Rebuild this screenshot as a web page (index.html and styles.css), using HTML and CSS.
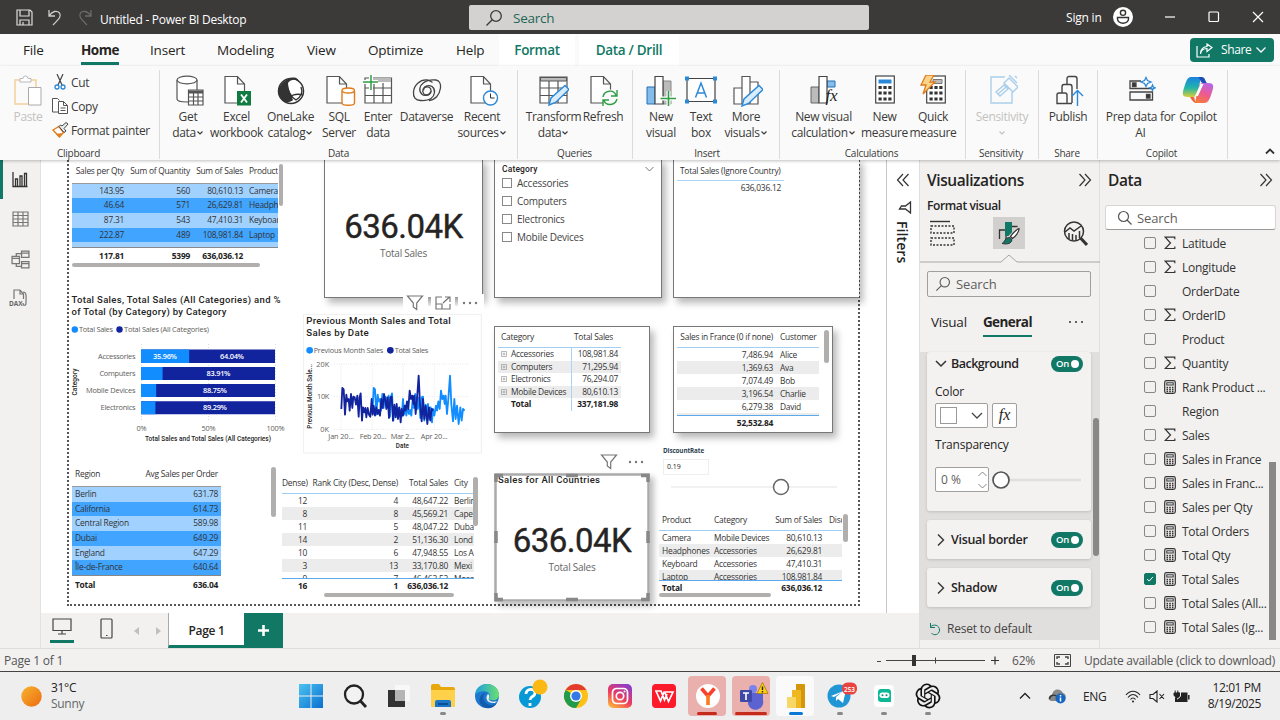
FILE: index.html
```html
<!DOCTYPE html>
<html lang="en">
<head>
<meta charset="utf-8">
<title>Untitled - Power BI Desktop</title>
<link rel="stylesheet" href="styles.css">
</head>
<body>
<svg class="defs" width="0" height="0">
  <defs>
    <symbol id="calc" viewBox="0 0 12 14"><rect x=".7" y=".7" width="10.6" height="12.6" rx="1.8" fill="none" stroke="#333" stroke-width="1.2"/><rect x="2.8" y="2.8" width="6.4" height="2.2" fill="none" stroke="#333"/><path d="M2.5 7.5h7M2.5 9.5h7M2.5 11.5h7" stroke="#333" stroke-width="1.3" stroke-dasharray="1.6 1.1"/></symbol>
    <symbol id="sigma" viewBox="0 0 12 14"><path d="M10.800 3.200V1.200H1.200L6.500 7l-5.300 5.500H10.800V10.500" fill="none" stroke="#333" stroke-width="1.200"/></symbol>
    <symbol id="down" viewBox="0 0 8 6"><path d="M1.500 1.500L4 4l2.500-2.500" fill="none" stroke="currentColor" stroke-width="1.200"/></symbol>
    <symbol id="doc" viewBox="0 0 24 32"><path d="M1 1.500h12.500l7 7.500V28H1zM13.500 1.500V9h7" fill="#fff" stroke="#555" stroke-width="1.200"/></symbol>
    <symbol id="keypad" viewBox="0 0 20 30"><rect x=".7" y="1" width="18.600" height="27" fill="#fff" stroke="#444" stroke-width="1.200"/><path d="M3.500 12.500h13M3.500 18h13M3.500 24h13" stroke="#333" stroke-width="3" stroke-dasharray="3.200 1.700"/></symbol>
    <symbol id="funnel" viewBox="0 0 18 16"><path d="M1.500 1h15l-5.800 7v6.500l-3.400-2.500V8z" fill="#fff" stroke="#777" stroke-width="1.200"/></symbol>
    <symbol id="lens" viewBox="0 0 18 18"><circle cx="11" cy="7" r="5.300" fill="none" stroke="currentColor" stroke-width="1.300"/><path d="M7.200 10.800L1.500 16.500" stroke="currentColor" stroke-width="1.300"/></symbol>
    <symbol id="collapse" viewBox="0 0 14 14"><path d="M1.500 1l5.500 6-5.500 6M7 1l5.500 6L7 13" fill="none" stroke="#333" stroke-width="1.200"/></symbol>
    <symbol id="plusbox" viewBox="0 0 6 6"><path d="M.5.500h5v5h-5zM3 1.500v3M1.500 3h3" fill="none" stroke="#999" stroke-width=".7"/></symbol>
  </defs>
</svg>
<div class="app">
  <header class="titlebar">
    <div class="quick">
      <svg width="17" height="17" viewBox="0 0 17 17" fill="none" stroke="#ddd" stroke-width="1.200"><path d="M1 1h13l2 2v13H1zM4 1v6h9V1M4 16v-5h9v5M7 13v3"/></svg>
      <svg width="16" height="17" viewBox="0 0 16 17" fill="none" stroke="#ccc" stroke-width="1.300"><path d="M2 1v6h6M2 7C5 2 10 1 12.500 4c2 3 .5 5-6.500 12"/></svg>
      <svg width="16" height="17" viewBox="0 0 16 17" fill="none" stroke="#6c6b6a" stroke-width="1.300"><path d="M14 1v6H8M14 7C11 2 6 1 3.500 4c-2 3-.5 5 6.500 12"/></svg>
    </div>
    <span class="doc-title">Untitled - Power BI Desktop</span>
    <div class="top-search"><svg width="18" height="18"><use href="#lens"/></svg><span>Search</span></div>
    <div class="account"><span>Sign in</span>
      <svg width="20" height="20" viewBox="0 0 20 20"><circle cx="10" cy="10" r="10" fill="#fff"/><g fill="none" stroke="#333" stroke-width="1.400"><circle cx="10" cy="5.800" r="2.600"/><path d="M4.500 10.500h11v1.500a5.500 4.200 0 0 1-11 0z"/></g></svg>
    </div>
    <div class="window-buttons">
      <svg width="12" height="12"><path d="M1 6h10" stroke="#fff" stroke-width="1.200"/></svg>
      <svg width="12" height="12"><rect x="1" y="1" width="9.500" height="9.500" rx="1" fill="none" stroke="#fff" stroke-width="1.200"/></svg>
      <svg width="12" height="12"><path d="M1 1l10 10M11 1L1 11" stroke="#fff" stroke-width="1.200"/></svg>
    </div>
  </header>

  <nav class="tabs">
    <span class="tab t-file">File</span><span class="tab t-home">Home</span><span class="tab t-insert">Insert</span><span class="tab t-model">Modeling</span><span class="tab t-view">View</span><span class="tab t-opt">Optimize</span><span class="tab t-help">Help</span>
    <span class="tab ctx c-format">Format</span><span class="tab ctx c-data">Data / Drill</span>
    <span class="share"><svg width="17" height="15" viewBox="0 0 17 15" fill="none" stroke="#fff" stroke-width="1.200"><path d="M1 3v11h12v-3M4.500 11C5 7 7 5.500 11 5.500V8.500L16 4.500 11 1v2.500C6.500 4 4.500 7 4.500 11z"/></svg>Share<svg width="12" height="8" viewBox="0 0 12 8"><path d="M1.500 1.500L6 6l4.500-4.500" fill="none" stroke="#fff" stroke-width="1.300"/></svg></span>
  </nav>

  <section class="ribbon">
    <div class="group g-clip">
      <div class="tools">
        <div class="btn w56 off"><svg width="28" height="32" viewBox="0 0 28 32" fill="none"><path d="M6 5H1v24h13M17 5h5v7" stroke="#f5cf9b" stroke-width="1.500"/><path d="M6 7V3.500h3a2.500 2.500 0 0 1 5 0h3V7z" stroke="#b9b9b9" fill="#fff"/><path d="M14.500 12.500h12.500v17.500H14.500z" stroke="#aaa" fill="#fff"/></svg><span>Paste</span></div>
        <div class="smalls">
          <div><svg width="17" height="16" viewBox="0 0 17 16" fill="none"><path d="M5 0l5 11M11 0L6 11" stroke="#444" stroke-width="1.200"/><circle cx="5" cy="13" r="2" stroke="#2b88d8" stroke-width="1.300"/><circle cx="11" cy="13" r="2" stroke="#2b88d8" stroke-width="1.300"/></svg>Cut</div>
          <div><svg width="17" height="16" viewBox="0 0 17 16" fill="#fff" stroke="#555"><path d="M7 14H.500V.500h5l2 2"/><path d="M6.500 3.500h5l4 4v8h-9zM11.500 3.500v4h4M8.500 10h5M8.500 12.500h5"/></svg>Copy</div>
          <div><svg width="17" height="16" viewBox="0 0 17 16"><path d="M1 8l6-3.500 4.500 6L7.500 15z" fill="#fff" stroke="#e07b1a" stroke-width="1.400"/><path d="M4 12l6-1-3 4z" fill="#e07b1a"/><path d="M7 4.500l5 6 2-1.500-2-2.500L16 2l-2-1.500-4 3.500-1.500-1z" fill="#eee" stroke="#444"/></svg>Format painter</div>
        </div>
      </div>
      <span class="caption">Clipboard</span>
    </div>
    <div class="group g-data">
      <div class="tools">
        <div class="btn w48"><svg class="nudge" width="30" height="32" viewBox="0 0 30 32" fill="#fff" stroke="#555" stroke-width="1.200"><path d="M2 5v19c0 4 20 4 20 0V5"/><ellipse cx="12" cy="5" rx="10" ry="3.800"/><path d="M13.500 15h14.500v15H13.500z"/><path d="M13.500 17h14.500" stroke-width="3"/><path d="M13.500 22h14.500M13.500 26h14.500M18.500 17v13M23 17v13"/></svg><span>Get<br>data<svg class="dn"><use href="#down"/></svg></span></div>
        <div class="btn w49"><svg class="nudge" width="28" height="32" viewBox="0 0 28 32"><use href="#doc" width="24" height="32"/><rect x="13" y="16" width="14" height="14.500" fill="#107c41"/><path d="M17 19.500l6 8M23 19.500l-6 8" stroke="#fff" stroke-width="1.800"/></svg><span>Excel<br>workbook</span></div>
        <div class="btn w59"><svg width="30" height="32" viewBox="0 0 30 32"><circle cx="15" cy="16" r="12.500" fill="#fff" stroke="#333" stroke-width="1.500"/><path d="M10 5C17 0 23 3 23 7c-3-3-8-3-11 1 0 5 2 10 5 17-3 3-9 3-12-1C1 18 1 11 10 5z" fill="#333"/><path d="M11 8c0 7 4 14 9 17 5-3 7-8 5-13M12 25c2-5 8-7 15-5" fill="none" stroke="#333" stroke-width="1.400"/></svg><span>OneLake<br>catalog<svg class="dn"><use href="#down"/></svg></span></div>
        <div class="btn w38"><svg class="nudge" width="30" height="32" viewBox="0 0 30 32"><use href="#doc" width="24" height="32"/><path d="M16 16v12c0 3 12.500 3 12.500 0V16" fill="#fff" stroke="#e07b1a" stroke-width="1.400"/><ellipse cx="22.200" cy="15.500" rx="6.200" ry="2.500" fill="#fff" stroke="#e07b1a" stroke-width="1.400"/></svg><span>SQL<br>Server</span></div>
        <div class="btn w40"><svg width="30" height="32" viewBox="0 0 30 32"><path d="M2 3h26.500v25H2z" fill="#fff" stroke="#555" stroke-width="1.200"/><path d="M10 3h18v4H10z" fill="#bbb"/><path d="M2 13h26.500M2 20.500h26.500M11 8v20M20 8v20" stroke="#555" stroke-width="1.200"/><path d="M8 0v15M0 7h15" stroke="#fff" stroke-width="4"/><path d="M8 0v15M0 7h15" stroke="#2f9e44" stroke-width="1.500"/></svg><span>Enter<br>data</span></div>
        <div class="btn w57"><svg width="30" height="32" viewBox="0 0 30 32" fill="none" stroke="#444" stroke-width="1.300"><path d="M19 16c0 3-2.500 4.500-5 4s-4-3-2.800-6C12.500 11 17 9.500 20 11.500c4 3 3 9-1 12-3.500 2.500-8 2-10.500 2C3.500 25.500 1 22 1.500 17 2 10 8 4.500 15 5c2.500.2 4 1.500 5.500 2.500"/><path d="M11.500 15.500c0-2.500 2-4 4.200-3.700 3 .4 3.800 3.200 3 5.200-1.500 3.500-6.500 4.500-9 2-3.500-3.500-1.800-8.500 1.500-11C15 5 20 4.500 24 5c3.500.5 5 4 4.500 8C27.500 20 23 25 17 25.500"/></svg><span>Dataverse</span></div>
        <div class="btn w54"><svg class="nudge" width="30" height="32" viewBox="0 0 30 32"><use href="#doc" x="1" width="24" height="32"/><circle cx="21.500" cy="23" r="7" fill="#fff" stroke="#2b88d8" stroke-width="1.400"/><path d="M21.500 18.500V23h4" fill="none" stroke="#333"/></svg><span>Recent<br>sources<svg class="dn"><use href="#down"/></svg></span></div>
      </div>
      <span class="caption">Data</span>
    </div>
    <div class="group g-query">
      <div class="tools">
        <div class="btn w57"><svg width="30" height="32" viewBox="0 0 30 32"><path d="M1 2h27v26H1z" fill="#fff" stroke="#555" stroke-width="1.200"/><path d="M1.500 2.500h26v3.500h-26z" fill="#bbb" stroke="#555"/><path d="M1 13h27M1 20.500h27M10 6v22M19 6v22" stroke="#555" stroke-width="1.200"/><path d="M10 30l2-7L26 10.500l4 4L16.500 27.500z" fill="#d9ecfb" stroke="#2b88d8" stroke-width="1.400"/></svg><span>Transform<br>data<svg class="dn"><use href="#down"/></svg></span></div>
        <div class="btn w42"><svg width="30" height="32" viewBox="0 0 30 32"><use href="#doc" x="2" width="24" height="32"/><circle cx="22" cy="23" r="8.500" fill="#fafafa"/><path d="M15 22c1-7 11-8 13-1.500M29 15v6h-6M29 24c-2 7-11 7-13 1.500M15 31v-6h6" fill="none" stroke="#2f9e44" stroke-width="1.400"/></svg><span>Refresh</span></div>
      </div>
      <span class="caption">Queries</span>
    </div>
    <div class="group g-insert">
      <div class="tools">
        <div class="btn w36"><svg width="30" height="32" viewBox="0 0 30 32"><path d="M1 12h8v17H1z" fill="#83bdee" stroke="#2470b3"/><path d="M17 6h8v23h-8z" fill="#bbb" stroke="#888"/><path d="M9 1.500h8V29H9z" fill="#fff" stroke="#444" stroke-width="1.200"/><path d="M22.500 16v15M14.500 23.500H30" stroke="#fff" stroke-width="4"/><path d="M22.500 16v15M14.500 23.500H30" stroke="#2f9e44" stroke-width="1.600"/></svg><span>New<br>visual</span></div>
        <div class="btn w44"><svg width="32" height="32" viewBox="0 0 32 32"><path d="M2 3.500h28v23H2z" fill="#fff" stroke="#444" stroke-width="1.200"/><path d="M0 1.500h4v4H0zM28 1.500h4v4h-4zM0 24.500h4v4H0zM28 24.500h4v4h-4z" fill="#2b88d8"/><path d="M10.500 22.500L16 8l5.500 14.500M12.500 18h7" fill="none" stroke="#2b88d8" stroke-width="1.500"/></svg><span>Text<br>box</span></div>
        <div class="btn w46"><svg class="nudge" width="30" height="32" viewBox="0 0 30 32"><path d="M1 13h8v16H1zM17 7h8v22h-8zM9 1.500h8V29H9z" fill="#fff" stroke="#555" stroke-width="1.200"/><path d="M9 31l2-7L26 10.500l4 4L15.500 28.500z" fill="#d9ecfb" stroke="#2b88d8" stroke-width="1.400"/></svg><span>More<br>visuals<svg class="dn"><use href="#down"/></svg></span></div>
      </div>
      <span class="caption">Insert</span>
    </div>
    <div class="group g-calc">
      <div class="tools">
        <div class="btn w75"><svg class="nudge" width="30" height="32" viewBox="0 0 30 32"><path d="M1 12h8v16H1z" fill="#bbb" stroke="#666"/><path d="M17 6h8v6h-8z" fill="#83bdee" stroke="#2470b3"/><path d="M9 1.500h8V28H9z" fill="#fff" stroke="#444" stroke-width="1.200"/><text x="15.500" y="26" class="fx-icon">fx</text></svg><span>New visual<br>calculation<svg class="dn"><use href="#down"/></svg></span></div>
        <div class="btn w47"><svg width="20" height="32" viewBox="0 0 20 32"><use href="#keypad" width="20" height="30"/><path d="M3.500 4.500h13v4h-13z" fill="#2b88d8"/></svg><span>New<br>measure</span></div>
        <div class="btn w50"><svg width="28" height="32" viewBox="0 0 28 32"><use href="#keypad" x="7" width="20" height="30"/><path d="M14 4.500h9v4h-9z" fill="#bbb" stroke="#777"/><path d="M7 0h8l-4 7h5L4 19l3-9H2z" fill="#fbd48c" stroke="#e07b1a" stroke-width="1.300"/></svg><span>Quick<br>measure</span></div>
      </div>
      <span class="caption">Calculations</span>
    </div>
    <div class="group g-sens">
      <div class="tools">
        <div class="btn w72 off"><svg class="nudge" width="28" height="32" viewBox="0 0 28 32" fill="none" stroke="#a9cfea" stroke-width="1.400"><path d="M15 2H1v26h21V17"/><path d="M6 17l8-7 4 4-8 7zM8.500 18.500l7-6M14 8l5-5 9 9-5 5zM19 0l8 8M25 1l2 2" /></svg><span>Sensitivity<br><svg class="dn"><use href="#down"/></svg></span></div>
      </div>
      <span class="caption">Sensitivity</span>
    </div>
    <div class="group g-share">
      <div class="tools">
        <div class="btn w58"><svg class="nudge" width="30" height="32" viewBox="0 0 30 32" fill="none" stroke="#444" stroke-width="1.400"><path d="M12 9V4q0-2.500 2-2.500h6q2 0 2 2.500v10M17 28.500H2V20q0-2 2-2h6q2 0 2 2v8M7 18v-6q0-2.500 2-2.500h6q2 0 2 2.500v16"/><path d="M22.500 31V15M17 21l5.500-5.500L28 21" stroke="#2b88d8"/></svg><span>Publish</span></div>
      </div>
      <span class="caption">Share</span>
    </div>
    <div class="group g-copilot">
      <div class="tools">
        <div class="btn w73"><svg class="nudge" width="28" height="32" viewBox="0 0 28 32" fill="none" stroke="#444" stroke-width="1.300"><path d="M13 6H2v7.500h22M2 17h22.500v8H2z"/><path d="M4.500 8h3.500v3.500H4.500zM18.500 19.500H22V23h-3.500z" fill="#333"/><path d="M18 2.500l1.500 3L23 7l-3.500 1.500-1.500 3-1.500-3L13 7l3.500-1.500zM24.500 10l.8 2 2 .8-2 .8-.8 2-.8-2-2-.8 2-.8z" stroke="#2b88d8"/></svg><span>Prep data for<br>AI</span></div>
        <div class="btn w42"><svg width="32" height="32" viewBox="0 0 32 32"><defs><linearGradient id="cp1" x1="0" y1="0" x2="0" y2="1"><stop offset="0" stop-color="#1a83e0"/><stop offset=".55" stop-color="#22b5a8"/><stop offset="1" stop-color="#d8cf35"/></linearGradient><linearGradient id="cp2" x1=".7" y1="0" x2=".3" y2="1"><stop offset="0" stop-color="#b865e8"/><stop offset=".55" stop-color="#ef5a8f"/><stop offset="1" stop-color="#f57b3c"/></linearGradient></defs><path d="M19 2H9C5 2 4 7 2 13s-2 9 4 9h5c4 0 4-4 6-10z" fill="url(#cp1)"/><path d="M13 28h9c5 0 6-5 8-11s2-9-4-9h-5c-4 0-4 4-6 10z" fill="url(#cp2)"/><path d="M16 2h4c3 0 3 4 5 6h-4c-3 0-3-6-5-6z" fill="#1d4eb5"/><path d="M8 22h4c1 3 1 6 4 6-4 0-5-1-8-6z" fill="#ef643c"/><path d="M18.500 9h3l-5.500 12h-3z" fill="#fff"/></svg><span>Copilot</span></div>
      </div>
      <span class="caption">Copilot</span>
    </div>
    <svg class="ribbon-up" width="10" height="7" viewBox="0 0 10 7"><path d="M1 5.500l4-4 4 4" fill="none" stroke="#333" stroke-width="1.800"/></svg>
  </section>

  <main class="body">
    <div class="workspace">
      <div class="upper">
        <aside class="rail">
          <div class="on"><svg width="16" height="16" viewBox="0 0 16 16" fill="none" stroke="#333" stroke-width="1.300"><path d="M1 0v14.500h14.500M3.500 14V7h2v7M8 14V4h2v10M12.500 14V1.500h2V14"/></svg></div>
          <div><svg width="17" height="16" viewBox="0 0 17 16" fill="none" stroke="#777" stroke-width="1.200"><path d="M1 1h15v14H1zM1 4.500h15M1 8h15M1 11.500h15M6 1v14M11 1v14"/></svg></div>
          <div><svg width="19" height="19" viewBox="0 0 18 18" fill="none" stroke="#777" stroke-width="1.200"><path d="M1 6h7v7H1zM10 1h7v6h-7zM10 11h7v6h-7zM1 8h7M10 3h7M10 13h7M5 6V3.500h5M5 13v2.500h5"/></svg></div>
          <div class="dax"><svg width="20" height="20" viewBox="0 0 20 20" fill="none" stroke="#777" stroke-width="1.200"><path d="M5 10V1h6l3.500 4v5M11 1v4h3.500M14 3c4 0 3 4 3 11 0 3-3 3-3 0"/><text x="0" y="17" class="dax-text">DAX</text></svg></div>
        </aside>
        <div class="report">
          <div class="sheet"></div>

          <div class="visual v-qty small">
            <div class="tbl c-qty blue">
              <div class="r h"><b>Sales per Qty</b><b>Sum of Quantity</b><b>Sum of Sales</b><b>Product</b></div>
              <div class="rows"><div class="r"><i>143.95</i><i>560</i><i>80,610.13</i><i>Camera</i></div><div class="r"><i>46.64</i><i>571</i><i>26,629.81</i><i>Headph</i></div><div class="r"><i>87.31</i><i>543</i><i>47,410.31</i><i>Keyboar</i></div><div class="r"><i>222.87</i><i>489</i><i>108,981.84</i><i>Laptop</i></div><div class="r"></div></div>
              <div class="r t"><i>117.81</i><i>5399</i><i>636,036.12</i><i></i></div>
            </div>
            <div class="hbar"></div><div class="vbar"></div>
          </div>

          <div class="visual card framed v-card1"><div class="num">636.04K</div><div class="sub">Total Sales</div></div>

          <div class="visual framed v-slicer">
            <div class="slicer-head"><span>Category</span><svg width="9" height="6" viewBox="0 0 9 6"><path d="M.5 1l4 4 4-4" fill="none" stroke="#777"/></svg></div>
            <div class="opt"><s></s>Accessories</div><div class="opt"><s></s>Computers</div><div class="opt"><s></s>Electronics</div><div class="opt"><s></s>Mobile Devices</div>
          </div>

          <div class="visual framed v-ignore small"><div class="ig-h">Total Sales (Ignore Country)</div><div class="ig-v">636,036.12</div></div>

          <div class="visual hover-tools v-tools1"><svg width="18" height="16"><use href="#funnel"/></svg><em></em><svg width="16" height="14" viewBox="0 0 16 14" fill="none" stroke="#777" stroke-width="1.200"><path d="M7 1H1v12h14V8M1 8h6v5M8 7l6.500-6M10 1h5v5"/></svg><em></em><svg width="16" height="4" fill="#777"><circle cx="2" cy="2" r="1.200"/><circle cx="8" cy="2" r="1.200"/><circle cx="14" cy="2" r="1.200"/></svg></div>

          <svg class="visual v-bars" width="216" height="160" viewBox="0 0 216 160">
            <g class="din title"><text x="0.500" y="11" textLength="209">Total Sales, Total Sales (All Categories) and %</text><text x="0.500" y="23" textLength="155">of Total (by Category) by Category</text></g>
            <circle cx="3.800" cy="37.500" r="3.200" fill="#118dff"/><circle cx="48.500" cy="37.500" r="3.200" fill="#12239e"/>
            <g class="seg"><text x="8" y="40" textLength="34">Total Sales</text><text x="53" y="40" textLength="85">Total Sales (All Categories)</text></g>
            <path d="M70.500 52v76M137.500 52v76M204.500 52v76" stroke="#ccc" stroke-width=".7" stroke-dasharray="1 2"/>
            <g fill="#12239e"><path d="M70 57.500h134V71H70zM70 75h134v13H70zM70 92h134v13H70zM70 109.300h134v13H70z"/></g>
            <g fill="#118dff"><path d="M70 57.500h48.200V71H70zM70 75h21.600v13H70zM70 92h15.200v13H70zM70 109.300h14.400v13H70z"/></g>
            <g class="seg end"><text x="64.500" y="67" textLength="37.500">Accessories</text><text x="64.500" y="84.300" textLength="36">Computers</text><text x="64.500" y="101.300" textLength="49.500">Mobile Devices</text><text x="64.500" y="118" textLength="35">Electronics</text></g>
            <g class="seg wh mid"><text x="94" y="67" textLength="24">35.96%</text><text x="161" y="67" textLength="24">64.04%</text><text x="147.500" y="84.300" textLength="24">83.91%</text><text x="144" y="101.300" textLength="24">88.75%</text><text x="144" y="118.300" textLength="24">89.29%</text></g>
            <g class="seg mid"><text x="70.500" y="139" textLength="10">0%</text><text x="137.500" y="139" textLength="14">50%</text><text x="204.500" y="139" textLength="18">100%</text></g>
            <g class="din axis mid"><text x="137" y="149" textLength="126">Total Sales and Total Sales (All Categories)</text><text transform="translate(6 90) rotate(-90)" textLength="27">Category</text></g>
          </svg>

          <svg class="visual v-line" width="180" height="140" viewBox="40 90 540 420">
            <path d="M41 91h534v416H41z" fill="#fff" stroke="#e6e6e6" stroke-width="2"/>
            <g class="din title3"><text x="50" y="120" textLength="433">Previous Month Sales and Total</text><text x="50" y="156" textLength="187">Sales by Date</text></g>
            <circle cx="60" cy="199" r="10" fill="#118dff"/><circle cx="302" cy="199" r="10" fill="#12239e"/>
            <g class="seg3"><text x="72" y="206" textLength="209">Previous Month Sales</text><text x="315" y="206" textLength="101">Total Sales</text><text x="80" y="248" textLength="39">20K</text><text x="82" y="346" textLength="37">10K</text><text x="92" y="443" textLength="26">0K</text><text x="116" y="464" textLength="77">Jan 20...</text><text x="210" y="464" textLength="80">Feb 20...</text><text x="303" y="464" textLength="72">Mar 2...</text><text x="393" y="464" textLength="81">Apr 20...</text></g>
            <path d="M134 240h406M134 338h406M134 436h406M154 240v200M248 240v200M340 240v200M434 240v200" stroke="#d0d0d0" stroke-width="2" stroke-dasharray="2 5"/>
            <defs><path id="series" d="M155 375L158 312L162 316L166 392L170 332L173 352L177 345L180 380L184 330L188 372L191 338L195 340L199 362L203 335L207 398L210 340L213 328L217 410L220 370L224 385L227 372L230 400L234 372L238 392L242 398L246 345L249 392L252 365L256 395L260 370L264 390L267 378L271 395L275 345L279 372L283 330L287 350L290 375L294 340L298 402L302 340L306 338L310 410L314 362L318 400L321 360L325 405L329 370L333 415L336 375L340 395L345 365L348 380L352 352L356 375L360 320L364 345L368 335L371 360L374 335L378 390L382 345L387 275L391 360L396 412L400 345L404 405L408 365L413 420L418 370L422 410L426 375L431 380" fill="none" stroke-width="5.500" stroke-linejoin="round"/></defs>
            <use href="#series" x="94" stroke="#118dff"/><use href="#series" stroke="#12239e"/>
            <g class="din axis3"><text x="318" y="493" textLength="40">Date</text><text transform="translate(66 434) rotate(-90)" textLength="194">Previous Month Sale...</text></g>
          </svg>

          <div class="visual framed v-matrix small">
            <div class="tbl c-mx lined">
              <div class="r h"><b>Category</b><b>Total Sales</b></div>
              <div class="rows"><div class="r"><i><svg width="6" height="6"><use href="#plusbox"/></svg>Accessories</i><i>108,981.84</i></div><div class="r"><i><svg width="6" height="6"><use href="#plusbox"/></svg>Computers</i><i>71,295.94</i></div><div class="r"><i><svg width="6" height="6"><use href="#plusbox"/></svg>Electronics</i><i>76,294.07</i></div><div class="r"><i><svg width="6" height="6"><use href="#plusbox"/></svg>Mobile Devices</i><i>80,610.13</i></div></div>
              <div class="r t"><i>Total</i><i>337,181.98</i></div>
            </div>
          </div>

          <div class="visual framed v-france small">
            <div class="tbl c-fr lined">
              <div class="r h"><b>Sales in France (0 if none)</b><b>Customer</b></div>
              <div class="rows"><div class="r"><i>7,486.94</i><i>Alice</i></div><div class="r"><i>1,369.63</i><i>Ava</i></div><div class="r"><i>7,074.49</i><i>Bob</i></div><div class="r"><i>3,196.54</i><i>Charlie</i></div><div class="r"><i>6,279.38</i><i>David</i></div><div class="r"></div></div>
              <div class="r t"><i>52,532.84</i><i></i></div>
            </div>
            <div class="vbar"></div>
          </div>

          <div class="visual v-region small">
            <div class="tbl c-rg blue">
              <div class="r h"><b>Region</b><b>Avg Sales per Order</b></div>
              <div class="rows"><div class="r"><i>Berlin</i><i>631.78</i></div><div class="r"><i>California</i><i>614.73</i></div><div class="r"><i>Central Region</i><i>589.98</i></div><div class="r"><i>Dubai</i><i>649.29</i></div><div class="r"><i>England</i><i>647.29</i></div><div class="r"><i>Île-de-France</i><i>640.64</i></div></div>
              <div class="r t"><i>Total</i><i>636.04</i></div>
            </div>
            <div class="vbar"></div>
          </div>

          <div class="visual v-rank small">
            <div class="tbl c-rk lined">
              <div class="r h"><b>Dense)</b><b>Rank City (Desc, Dense)</b><b>Total Sales</b><b>City</b></div>
              <div class="rows"><div class="r"><i>12</i><i>4</i><i>48,647.22</i><i>Berlin</i></div><div class="r"><i>8</i><i>8</i><i>45,569.21</i><i>Cape</i></div><div class="r"><i>11</i><i>5</i><i>48,047.22</i><i>Duba</i></div><div class="r"><i>14</i><i>2</i><i>51,136.30</i><i>Lond</i></div><div class="r"><i>10</i><i>6</i><i>47,948.55</i><i>Los A</i></div><div class="r"><i>3</i><i>13</i><i>33,170.80</i><i>Mexi</i></div><div class="r"><i>9</i><i>7</i><i>46,463.52</i><i>Mosc</i></div></div>
              <div class="r t"><i>16</i><i>1</i><i>636,036.12</i><i></i></div>
            </div>
            <div class="hbar"></div><div class="vbar"></div>
          </div>

          <div class="visual hover-tools v-tools2"><svg width="18" height="16"><use href="#funnel"/></svg><svg width="16" height="4" fill="#777"><circle cx="2" cy="2" r="1.200"/><circle cx="8" cy="2" r="1.200"/><circle cx="14" cy="2" r="1.200"/></svg></div>
          <div class="visual card v-card2"><svg class="handles" width="156" height="130" viewBox="0 0 156 130"><path d="M1.500 1.500h153v126h-153z" fill="none" stroke="#aaa" stroke-width="2.500"/><path d="M2 9V2.500h7M147 2.500h7V9M2 120v6.500h7M147 126.500h7V120M72 2.500h12M72 126.500h12M2 58v12M154 58v12" fill="none" stroke="#888" stroke-width="3.500"/></svg><div class="card-title">Sales for All Countries</div><div class="num">636.04K</div><div class="sub">Total Sales</div></div>

          <div class="visual v-rate"><b>DiscountRate</b><span>0.19</span><svg width="170" height="18" viewBox="0 0 170 18"><path d="M0 9h166" stroke="#e3e3e3"/><circle cx="110" cy="9" r="7.500" fill="#fff" stroke="#666" stroke-width="1.500"/></svg></div>

          <div class="visual v-prod small">
            <div class="tbl c-pr lined">
              <div class="r h"><b>Product</b><b>Category</b><b>Sum of Sales</b><b>Disc</b></div>
              <div class="rows"><div class="r"><i>Camera</i><i>Mobile Devices</i><i>80,610.13</i></div><div class="r"><i>Headphones</i><i>Accessories</i><i>26,629.81</i></div><div class="r"><i>Keyboard</i><i>Accessories</i><i>47,410.31</i></div><div class="r"><i>Laptop</i><i>Accessories</i><i>108,981.84</i></div></div>
              <div class="r t"><i>Total</i><i></i><i>636,036.12</i></div>
            </div>
            <div class="hbar"></div><div class="vbar"></div>
          </div>
        </div>
        <aside class="filters">
          <svg width="14" height="14" class="flip"><use href="#collapse"/></svg>
          <svg width="14" height="13" viewBox="0 0 14 13"><path d="M12.500 1v11L7.500 8H1.500l2-3h4z" fill="none" stroke="#333" stroke-width="1.300"/></svg>
          <span>Filters</span>
        </aside>
      </div>
      <div class="pages">
        <div class="layout-btn sel"><svg width="20" height="17" viewBox="0 0 20 17" fill="none" stroke="#444" stroke-width="1.200"><path d="M1 1h18v11.500H1zM10 12.500V16M6 16h8"/></svg></div>
        <div class="layout-btn phone"><svg width="13" height="21" viewBox="0 0 13 21" fill="none" stroke="#444" stroke-width="1.200"><rect x="1" y="1" width="11" height="19" rx="1"/><path d="M6 17.500h1.500"/></svg></div>
        <div class="arrows"><svg width="5" height="8"><path d="M5 0v8L0 4z" fill="#c0c0c0"/></svg><svg width="5" height="8"><path d="M0 0v8l5-4z" fill="#c0c0c0"/></svg></div>
        <div class="page-tab">Page 1</div>
        <div class="page-add"><svg width="11" height="11"><path d="M5.500 0v11M0 5.500h11" stroke="#fff" stroke-width="2.600"/></svg></div>
      </div>
    </div>

    <aside class="viz">
      <div class="pane-head"><h2>Visualizations</h2><svg width="14" height="14"><use href="#collapse"/></svg></div>
      <div class="format-label">Format visual</div>
      <div class="modes">
        <div><svg width="26" height="26" viewBox="0 0 26 26" fill="none" stroke="#333" stroke-width="1.400"><path d="M0 1.500h20"/><path d="M1 6h23v7H1zM1 18h23v7H1z" stroke-dasharray="2 1.500"/></svg></div>
        <div class="sel"><svg width="24" height="24" viewBox="0 0 24 24"><path d="M8.500 9H2.500v9M15 5.500h5.500M9 18.500v-7" fill="none" stroke="#333" stroke-width="1.300"/><path d="M8 1h7v14H8z" fill="#117865"/><path d="M21.500 8.500l-8 8.500" stroke="#d2d0ce" stroke-width="5.500"/><path d="M22 7.500c-2 .5-7 5.500-8.500 8l2 2c2.500-1.500 7-7 6.500-10z" fill="#fff" stroke="#333" stroke-width="1.200"/><path d="M5 22.500c2.500-.5 2.500-5.500 6.500-6 2.500 0 4 2 3 4-1.500 2.500-6 3-9.500 2z" fill="#117865" stroke="#333"/></svg></div>
        <div><svg width="25" height="25" viewBox="0 0 25 25" fill="none" stroke="#333" stroke-width="1.500"><circle cx="11" cy="10.500" r="9.500"/><path d="M17.500 17l6.500 7" stroke-width="3"/><path d="M2 11l5-4 4 3 7-5M6 18v-6M9.500 19v-6M13 19v-5M16.500 17v-7"/></svg></div>
      </div>
      <svg class="notch" width="180" height="9" viewBox="0 0 180 9"><path d="M0 8h81l8-7 8 7h83" fill="none" stroke="#a8a6a4"/></svg>
      <div class="viz-search"><svg width="16" height="16"><use href="#lens" width="16" height="16"/></svg>Search</div>
      <div class="viz-tabs"><span>Visual</span><span class="cur">General</span><svg width="16" height="4" fill="#333"><circle cx="2" cy="2" r="1"/><circle cx="8" cy="2" r="1"/><circle cx="14" cy="2" r="1"/></svg></div>
      <div class="cards">
        <div class="card-box first">
          <div class="line"><svg width="12" height="8" viewBox="0 0 12 8"><path d="M1 1l5 5 5-5" fill="none" stroke="#333" stroke-width="1.500"/></svg><b>Background</b><span class="toggle">On<em></em></span></div>
          <label>Color</label>
          <div class="colors"><div class="color-box"><em></em><svg width="12" height="8" viewBox="0 0 12 8"><path d="M1 1l5 5 5-5" fill="none" stroke="#444" stroke-width="1.300"/></svg></div><div class="fx">fx</div></div>
          <label>Transparency</label>
          <div class="transp"><div class="spin">0 %<svg width="9" height="18" viewBox="0 0 9 18"><path d="M.5 5l4-4 4 4M.5 13l4 4 4-4" fill="none" stroke="#888"/></svg></div><svg width="90" height="20" viewBox="0 0 90 20"><path d="M10 10h80" stroke="#e1dfdd" stroke-width="2.500"/><circle cx="10" cy="10" r="8" fill="#fff" stroke="#555" stroke-width="1.700"/></svg></div>
        </div>
        <div class="card-box"><div class="line"><svg width="8" height="14" viewBox="0 0 8 14"><path d="M1 1.500L6.500 7 1 12.500" fill="none" stroke="#333" stroke-width="1.400"/></svg><b>Visual border</b><span class="toggle">On<em></em></span></div></div>
        <div class="card-box"><div class="line"><svg width="8" height="14" viewBox="0 0 8 14"><path d="M1 1.500L6.500 7 1 12.500" fill="none" stroke="#333" stroke-width="1.400"/></svg><b>Shadow</b><span class="toggle">On<em></em></span></div></div>
        <div class="reset"><svg width="13" height="14" viewBox="0 0 13 14" fill="none" stroke="#117865"><path d="M1.500 1v4.500H6M1.500 5c3-3.500 9-2 9 3s-6 6-8 3"/></svg>Reset to default</div>
        <div class="thumb"></div>
      </div>
    </aside>

    <aside class="data">
      <div class="pane-head"><h2>Data</h2><svg width="14" height="14"><use href="#collapse"/></svg></div>
      <div class="data-search"><svg width="16" height="16" viewBox="0 0 16 16"><circle cx="6.500" cy="6.500" r="5" fill="none" stroke="#555" stroke-width="1.200"/><path d="M10 10l4.500 4.500" stroke="#555" stroke-width="1.200"/></svg>Search</div>
      <div class="fields">
        <div><s></s><svg><use href="#sigma"/></svg>Latitude</div>
        <div><s></s><svg><use href="#sigma"/></svg>Longitude</div>
        <div><s></s><svg></svg>OrderDate</div>
        <div><s></s><svg><use href="#sigma"/></svg>OrderID</div>
        <div><s></s><svg></svg>Product</div>
        <div><s></s><svg><use href="#sigma"/></svg>Quantity</div>
        <div><s></s><svg><use href="#calc"/></svg>Rank Product ...</div>
        <div><s></s><svg></svg>Region</div>
        <div><s></s><svg><use href="#sigma"/></svg>Sales</div>
        <div><s></s><svg><use href="#calc"/></svg>Sales in France</div>
        <div><s></s><svg><use href="#calc"/></svg>Sales in Franc...</div>
        <div><s></s><svg><use href="#calc"/></svg>Sales per Qty</div>
        <div><s></s><svg><use href="#calc"/></svg>Total Orders</div>
        <div><s></s><svg><use href="#calc"/></svg>Total Qty</div>
        <div><s class="ck"><svg viewBox="0 0 12 12"><path d="M2.500 6l2.500 2.500 4.500-5" fill="none" stroke="#fff" stroke-width="1.200"/></svg></s><svg><use href="#calc"/></svg>Total Sales</div>
        <div><s></s><svg><use href="#calc"/></svg>Total Sales (All...</div>
        <div><s></s><svg><use href="#calc"/></svg>Total Sales (Ig...</div>
        <em class="thumb"></em>
      </div>
    </aside>
  </main>

  <footer class="status">
    <span>Page 1 of 1</span>
    <div class="zoom"><svg width="124" height="12" viewBox="0 0 124 12"><path d="M2 7.500h4M11 6.500h99M60.500 3.500v6" stroke="#444" fill="none"/><path d="M39 1v11" stroke="#333" stroke-width="4"/><path d="M120 2.500v8M116 6.500h8" stroke="#333" stroke-width="1.200"/></svg><span>62%</span>
    <svg width="17" height="13" viewBox="0 0 17 13" fill="none" stroke="#444"><path d="M.5.500h16v12H.500z"/><path d="M3 5V3h3M11 3h3v2M14 8v2h-3M6 10H3V8" stroke-width="1.400"/></svg></div>
    <span class="update">Update available (click to download)</span>
  </footer>

  <footer class="taskbar">
    <div class="weather"><svg width="21" height="21" viewBox="0 0 21 21"><defs><linearGradient id="sun" x1="0" y1="0" x2="1" y2="1"><stop offset="0" stop-color="#f6b52e"/><stop offset="1" stop-color="#ee6a12"/></linearGradient></defs><circle cx="10.500" cy="10.500" r="10.200" fill="url(#sun)"/></svg><div>31°C<br><span>Sunny</span></div></div>
    <div class="dock">
      <div><svg viewBox="0 0 26 26"><defs><linearGradient id="win" x1="0" y1="0" x2="1" y2="1"><stop offset="0" stop-color="#4cc2f1"/><stop offset="1" stop-color="#0a6fd0"/></linearGradient></defs><path d="M1 1h11.500v11.500H1zM13.500 1H25v11.500H13.500zM1 13.500h11.500V25H1zM13.500 13.500H25V25H13.500z" fill="url(#win)"/></svg></div>
      <div><svg viewBox="0 0 26 26"><circle cx="12" cy="11.500" r="9" fill="#f2f2f2" stroke="#222" stroke-width="2.300"/><path d="M18.500 18l5.500 6" stroke="#222" stroke-width="2.800"/></svg></div>
      <div><svg viewBox="0 0 26 26"><path d="M9 2h15v16H9z" fill="#f8f8f8"/><path d="M2 7h17v17H2z" fill="#333"/><path d="M9 7h10v11H9z" fill="#b5b5b5"/></svg></div>
      <div class="run"><svg viewBox="0 0 26 26"><path d="M1 3q0-2 2-2h6l2 3h12q2 0 2 2v16q0 2-2 2H3q-2 0-2-2z" fill="#e8a80c"/><path d="M1 7h24v15q0 2-2 2H3q-2 0-2-2z" fill="#ffd04a"/><path d="M5 24v-5q0-2 2-2h12q2 0 2 2v5z" fill="#1976c9"/><path d="M8 21h10" stroke="#0b4f91" stroke-width="2"/></svg></div>
      <div><svg viewBox="0 0 26 26"><defs><linearGradient id="edge" x1="0" y1="0" x2="1" y2="0"><stop offset="0" stop-color="#1b9de2"/><stop offset="1" stop-color="#6be06f"/></linearGradient></defs><circle cx="13" cy="13" r="12" fill="#1b77cf"/><path d="M1 12C2 4 8 1 13 1c8 0 12 6 12 11 0 4-4 6-8 5-3 0-2-2-1-4 0-5-9-7-15-1z" fill="url(#edge)"/><path d="M12 10c-5 3-3 11 5 12 3 0 6-2 6-2-4 7-14 7-17 0-2-5 2-10 6-10z" fill="#135cad"/><path d="M14 11c3 2 0 4 1 6 2 2 5 2 8 1l-2 2c-9 1-10-6-7-9z" fill="#eee"/></svg></div>
      <div><svg viewBox="0 0 26 26" overflow="visible"><circle cx="12" cy="14" r="11" fill="#0799d6"/><path d="M8 11c0-6 9-6 9-1 0 4-5 3-5 7M12 20v3" fill="none" stroke="#fff" stroke-width="2.800"/><circle cx="22" cy="4" r="7.500" fill="#fdb913"/></svg></div>
      <div><svg viewBox="0 0 26 26"><circle cx="13" cy="13" r="12" fill="#fbc116"/><path d="M2.600 7A12 12 0 0 0 13 25l5.500-9.500L13 13z" fill="#229a4b"/><path d="M2.600 7a12 12 0 0 1 20.800 0H10z" fill="#e33b2e"/><circle cx="13" cy="13" r="6" fill="#fff"/><circle cx="13" cy="13" r="4.600" fill="#3478e5"/></svg></div>
      <div><svg viewBox="0 0 26 26"><defs><linearGradient id="ig" x1=".2" y1="1" x2=".8" y2="0"><stop offset="0" stop-color="#fdb13c"/><stop offset=".45" stop-color="#ee3b5d"/><stop offset="1" stop-color="#8a3bd0"/></linearGradient></defs><rect x="1" y="1" width="24" height="24" rx="5" fill="url(#ig)"/><rect x="5.500" y="5.500" width="15" height="15" rx="4" fill="none" stroke="#fff" stroke-width="1.700"/><circle cx="13" cy="13" r="3.700" fill="none" stroke="#fff" stroke-width="1.700"/><circle cx="17.500" cy="8.500" r="1" fill="#fff"/></svg></div>
      <div><svg viewBox="0 0 26 26"><rect x="1" y="1" width="24" height="24" rx="4" fill="#fb1b2b"/><path d="M4 8h6l3.500 9 2.500-6M5 8l4.500 10L13 9h9l-4.500 9.500L14 10" fill="none" stroke="#fff" stroke-width="1.700"/></svg></div>
      <div class="warm"><svg viewBox="0 0 26 26"><circle cx="13" cy="13" r="12" fill="#fff"/><path d="M6.500 5.500L13 13l6.500-7.500" fill="none" stroke="#f8412c" stroke-width="3.600"/><path d="M13 12v10" stroke="#fb7a24" stroke-width="3.600"/></svg></div>
      <div class="warm"><svg viewBox="0 0 26 26" overflow="visible"><circle cx="14" cy="6" r="4" fill="#7b83eb"/><path d="M9 10h15v7a7 7 0 0 1-15 4z" fill="#5b63d0"/><rect x="1" y="7" width="12" height="12" rx="1" fill="#4048a8"/><path d="M4 10h6M7 10v7" stroke="#fff" stroke-width="1.600"/><path d="M23.500-.5l5.500 11H18z" fill="#fdd017" stroke="#a67c00" stroke-width=".8"/><path d="M23.500 3.500v3.500M23.500 8v1.500" stroke="#222" stroke-width="1.400"/></svg></div>
      <div class="active"><svg viewBox="0 0 26 26"><path d="M13 1h8q1 0 1 1v23h-9z" fill="#d6960c"/><path d="M9 7h8q1 0 1 1v17H9z" fill="#efb820"/><path d="M4 14h8q1 0 1 1v10H5q-1 0-1-1z" fill="#f8d865"/></svg></div>
      <div class="run"><svg viewBox="0 0 26 26" overflow="visible"><circle cx="12" cy="13" r="11.500" fill="#2296d4"/><path d="M4 13l15-6-3 13-5-4-2 2v-4l6-5-8 5z" fill="#fff"/><rect x="15" y="-.5" width="15" height="12" rx="5.500" fill="#e8423f"/><text x="22.500" y="8.500" class="badge">253</text></svg></div>
      <div class="run"><svg viewBox="0 0 26 26"><rect x="3" y="2" width="20" height="22" rx="4" fill="#fff"/><path d="M7 9q0-3 3-3h7q3 0 3 3v10h-10q-3 0-3-3z" fill="#0cb896"/><rect x="8.500" y="9.500" width="10" height="5.500" rx="2.700" fill="#fff"/><circle cx="11.500" cy="12.200" r="1" fill="#0a8a70"/><circle cx="15.500" cy="12.200" r="1" fill="#0a8a70"/></svg></div>
      <div class="run"><svg viewBox="-.5 -.5 25 25"><path fill="#111" d="M22.2819 9.8211a5.9847 5.9847 0 0 0-.5157-4.9108 6.0462 6.0462 0 0 0-6.5098-2.9A6.0651 6.0651 0 0 0 4.9807 4.1818a5.9847 5.9847 0 0 0-3.9977 2.9 6.0462 6.0462 0 0 0 .7427 7.0966 5.98 5.98 0 0 0 .511 4.9107 6.051 6.051 0 0 0 6.5146 2.9001A5.9847 5.9847 0 0 0 13.2599 24a6.0557 6.0557 0 0 0 5.7718-4.2058 5.9894 5.9894 0 0 0 3.9977-2.9001 6.0557 6.0557 0 0 0-.7475-7.0729zm-9.022 12.6081a4.4755 4.4755 0 0 1-2.8764-1.0408l.1419-.0804 4.7783-2.7582a.7948.7948 0 0 0 .3927-.6813v-6.7369l2.02 1.1686a.071.071 0 0 1 .038.052v5.5826a4.504 4.504 0 0 1-4.4945 4.4944zm-9.6607-4.1254a4.4708 4.4708 0 0 1-.5346-3.0137l.142.0852 4.783 2.7582a.7712.7712 0 0 0 .7806 0l5.8428-3.3685v2.3324a.0804.0804 0 0 1-.0332.0615L9.74 19.9502a4.4992 4.4992 0 0 1-6.1408-1.6464zM2.3408 7.8956a4.485 4.485 0 0 1 2.3655-1.9728V11.6a.7664.7664 0 0 0 .3879.6765l5.8144 3.3543-2.0201 1.1685a.0757.0757 0 0 1-.071 0l-4.8303-2.7865A4.504 4.504 0 0 1 2.3408 7.872zm16.5963 3.8558L13.1038 8.364 15.1192 7.2a.0757.0757 0 0 1 .071 0l4.8303 2.7913a4.4944 4.4944 0 0 1-.6765 8.1042v-5.6772a.79.79 0 0 0-.407-.667zm2.0107-3.0231l-.142-.0852-4.7735-2.7818a.7759.7759 0 0 0-.7854 0L9.409 9.2297V6.8974a.0662.0662 0 0 1 .0284-.0615l4.8303-2.7866a4.4992 4.4992 0 0 1 6.6802 4.66zM8.3065 12.863l-2.02-1.1638a.0804.0804 0 0 1-.038-.0567V6.0742a4.4992 4.4992 0 0 1 7.3757-3.4537l-.142.0805L8.704 5.459a.7948.7948 0 0 0-.3927.6813zm1.0976-2.3654l2.602-1.4998 2.6069 1.4998v2.9994l-2.5974 1.4997-2.6067-1.4997Z"/></svg></div>
    </div>
    <div class="tray">
      <svg width="12" height="8" viewBox="0 0 12 8"><path d="M1 6.500l5-5 5 5" fill="none" stroke="#222" stroke-width="1.300"/></svg>
      <svg width="19" height="16" viewBox="0 0 19 16"><path d="M4 13c-5 0-4-6 0-6 1-7 9-7 11-2 4 1 3 6 1 8z" fill="#888"/><path d="M1.500 11c1-5 5-4 7-3s4 0 5-2" stroke="#333" stroke-width="1.300" fill="none"/><circle cx="12.500" cy="10.500" r="5" fill="#1466c0"/><path d="M12.500 7v1.500M12.500 9.500v4" stroke="#fff" stroke-width="1.500"/></svg>
      <span class="lang">ENG</span>
      <svg width="16" height="13" viewBox="0 0 16 13" fill="none" stroke="#222" stroke-width="1.200"><path d="M1 5c4-5 10-5 14 0M3 7.500c3-4 7-4 10 0M5.500 9.500c1.500-2 3.500-2 5 0"/><circle cx="8" cy="11.500" r="1" fill="#222" stroke="none"/></svg>
      <svg width="16" height="13" viewBox="0 0 16 13" fill="none" stroke="#222" stroke-width="1.100"><path d="M1 4.500h3l4-3.500v11L4 8.500H1zM10.500 4l4.500 5M15 4l-4.500 5"/></svg>
      <svg width="17" height="13" viewBox="0 0 17 13"><path d="M4 2.500h10.500v9.500H2V8z" fill="#222"/><path d="M15.800 5v4.500" stroke="#222" stroke-width="1.500"/><path d="M1 3h5v2.500q-2.500 3-5 0zM2.200 .500v2.500M4.800 .500v2.500" fill="#222" stroke="#222"/><path d="M7.500 1v5q-2 3-3.500 3" stroke="#eee" fill="none"/></svg>
    </div>
    <div class="clock">12:01 PM<br>8/19/2025</div>
  </footer>
</div>
</body>
</html>
```

FILE: styles.css
```css
* { box-sizing: border-box; }
body { margin: 0; font-family: "Open Sans", "Noto Sans", sans-serif; font-size: 12px; color: #252423; width: 1280px; height: 720px; overflow: hidden; }
svg { flex: none; display: block; }
.defs { position: absolute; }
.app { width: 1280px; height: 720px; display: flex; flex-direction: column; background: #f2f1f0; }
i, em, s { font-style: normal; text-decoration: none; }

/* title bar */
.titlebar { height: 34px; background: #3b3a39; color: #fff; display: flex; align-items: center; flex: none; }
.quick { display: flex; gap: 14px; margin-left: 16px; width: 84px; }
.doc-title { width: 369px; font-size: 12px; letter-spacing: -.28px; padding-top: 4px; }
.top-search { width: 400px; height: 25px; border-radius: 2px; background: #d3d2d0; display: flex; align-items: center; gap: 10px; padding-left: 16px; color: #1e6657; font-size: 13.500px; letter-spacing: -.25px; padding-top: 1px; }
.top-search svg { color: #3b3a39; }
.account { display: flex; align-items: center; gap: 11px; margin-left: 197px; width: 98px; font-size: 12px; letter-spacing: -.2px; }
.window-buttons { display: flex; gap: 32px; }

/* tabs */
.tabs { height: 32px; background: #fafafa; display: flex; flex: none; font-size: 13.500px; line-height: 32px; padding-left: 23px; }
.tab { height: 32px; white-space: nowrap; letter-spacing: -.2px; }
.t-file { width: 58px; }
.t-home { width: 38px; margin-right: 31px; font-weight: 700; border-bottom: 3px solid #117865; height: 31px; letter-spacing: -.5px; }
.t-insert { width: 67px; }
.t-model { width: 90px; }
.t-view { width: 61px; }
.t-opt { width: 88px; }
.t-help { width: 43px; }
.ctx { background: #fff; color: #117865; font-weight: 600; text-align: center; letter-spacing: -.3px; }
.c-format { width: 76px; margin-right: 4px; }
.c-data { width: 100px; }
.share { margin: 4px 6px 0 auto; width: 84px; height: 24px; background: #117865; border-radius: 4px; color: #fff; display: flex; align-items: center; gap: 4px; padding-left: 6px; font-size: 12px; letter-spacing: -.4px; }
.share svg:first-child { margin-right: 4px; }

/* ribbon */
.ribbon { height: 94px; background: #fafafa; display: flex; flex: none; padding-top: 4px; position: relative; z-index: 5; box-shadow: 0 1px 3px rgba(0,0,0,.25); }
.group { height: 89px; border-right: 1px solid #dcdbda; display: flex; flex-direction: column; align-items: center; justify-content: space-between; color: #3b3a39; }
.tools { display: flex; align-self: flex-start; height: 72px; }
.caption { font-size: 10px; line-height: 12px; letter-spacing: -.25px; padding-right: 2px; }
.g-clip { width: 160px; }
.g-data { width: 358px; padding-left: 4px; }
.g-query { width: 115px; padding-left: 7px; }
.g-insert { width: 147px; padding-left: 10px; }
.g-calc { width: 186px; padding-left: 6px; }
.g-query .caption, .g-insert .caption, .g-calc .caption, .g-copilot .caption { margin-left: -6px; }
.g-data .caption { margin-left: -2px; }
.g-sens { width: 73px; }
.g-share { width: 59px; }
.g-copilot { width: 130px; padding-left: 6px; }
.btn { display: flex; flex-direction: column; align-items: center; padding-top: 5px; white-space: nowrap; text-align: center; line-height: 16px; font-size: 12px; letter-spacing: -.33px; }
.btn > span { margin: 2px -10px 0; }
.nudge { margin-left: 3px; }
.off { color: #c3c2c0; }
.w36 { width: 36px; } .w38 { width: 38px; } .w40 { width: 40px; } .w42 { width: 42px; } .w44 { width: 44px; } .w46 { width: 46px; }
.w47 { width: 47px; } .w48 { width: 48px; } .w49 { width: 49px; } .w50 { width: 50px; } .w54 { width: 54px; } .w56 { width: 56px; }
.w57 { width: 57px; } .w58 { width: 58px; } .w59 { width: 59px; } .w72 { width: 72px; } .w73 { width: 73px; } .w75 { width: 75px; }
.dn { display: inline-block; width: 8px; height: 6px; vertical-align: 1px; }
.smalls { margin-left: -4px; font-size: 12px; letter-spacing: -.35px; }
.smalls div { height: 24px; display: flex; align-items: center; gap: 2px; white-space: nowrap; }
.fx-icon { font: italic 17px "Liberation Serif", serif; fill: #222; }
.ribbon-up { position: absolute; left: 1265px; top: 82px; }

/* body */
.body { height: 489px; display: flex; flex: none; border-bottom: 1px solid #dedddb; }
.workspace { width: 919px; display: flex; flex-direction: column; }
.upper { display: flex; height: 453px; }
.rail { width: 41px; height: 488px; background: #f2f1f0; border-right: 1px solid #e3e2e0; }
.rail div { height: 40px; display: flex; align-items: center; justify-content: center; }
.rail .on { border-left: 3px solid #117865; padding-right: 3px; height: 39px; }
.rail .dax { padding-right: 2px; }
.dax-text { font: 700 6.500px "Open Sans", sans-serif; fill: #666; stroke: none; }
.report { width: 845px; height: 453px; position: relative; background: #fff; overflow: hidden; flex: none; }
.filters { width: 33px; background: #fff; border-left: 1px solid #c8c6c4; display: flex; flex-direction: column; align-items: center; padding-top: 13px; }
.filters svg + svg { margin-top: 14px; margin-left: 3px; }
.filters span { writing-mode: vertical-rl; font-weight: 600; font-size: 14px; letter-spacing: .1px; margin-top: 7px; line-height: 16px; margin-right: 2px; }
.flip { transform: scaleX(-1); }

.sheet { position: absolute; left: 26px; top: -4px; width: 793px; height: 450px; border: 2px dotted #555; }
.visual { position: absolute; }
.framed { background: #fff; border: 1px solid #777; box-shadow: 4px 5px 7px rgba(0,0,0,.28); }
.small { font-size: 8.400px; letter-spacing: -.24px; color: #333; }
.num { font: 400 33px/36px Roboto, sans-serif; -webkit-text-stroke: .4px #252423; color: #252423; text-align: center; letter-spacing: -.5px; }
.sub { font-size: 10px; color: #666; text-align: center; line-height: 14px; letter-spacing: -.25px; }

/* data tables */
.tbl b { font-weight: 400; }
.tbl { overflow: hidden; white-space: nowrap; }
.r { display: grid; }
.rows { overflow: hidden; }
.tbl .t { font-weight: 700; color: #222; }
.blue .r { height: 14.700px; line-height: 14.700px; }
.blue .rows { border-top: 1.500px solid #999; border-bottom: 1.500px solid #888; }
.blue .rows .r { background: #a0d1ff; }
.blue .rows .r:nth-child(even) { background: #41a4ff; }
.lined .r { height: 13px; line-height: 13px; }
.lined .rows { border-top: 1px solid #9fcff5; }
.lined .rows .r:nth-child(even) { background: #ececec; }
.hbar, .vbar { position: absolute; background: #b0afae; border-radius: 3px; }

.v-qty { left: 31px; top: 4px; width: 214px; }
.c-qty { width: 206px; }
.c-qty .r { grid-template-columns: 52px 66px 53px auto; }
.c-qty .r > :nth-child(-n+3) { text-align: right; }
.c-qty .r > :nth-child(4) { padding-left: 6px; }
.c-qty .h { height: 18.500px; }
.c-qty .rows { height: 65.500px; }
.c-qty .t { padding-top: 1px; }
.v-qty .hbar { left: 0; top: 99px; width: 188px; height: 4px; }
.v-qty .vbar { left: 207px; top: 0; width: 4px; height: 42px; }

.v-card1 { left: 283px; top: -2px; width: 159px; height: 140px; padding-top: 50px; }
.v-card1 .sub { padding-top: 1px; }
.v-slicer { left: 453px; top: -2px; width: 168px; height: 140px; padding: 4px 7px 0; }
.slicer-head { display: flex; justify-content: space-between; align-items: center; font: 500 8.500px/12px Roboto, sans-serif; letter-spacing: .15px; height: 11px; }
.opt { height: 18px; display: flex; align-items: center; gap: 5px; font-size: 10px; letter-spacing: -.25px; color: #444; }
.opt s { width: 10px; height: 10px; border: 1px solid #888; }
.v-ignore { left: 632px; top: -2px; width: 186px; height: 140px; border-right: 0; padding: 4px 0 0 3px; }
.ig-h { width: 107px; height: 18px; line-height: 15px; border-bottom: 1.500px solid #a9d4f7; padding-left: 3px; white-space: nowrap; }
.ig-v { width: 104px; text-align: right; line-height: 14px; }

.hover-tools { background: #fff; display: flex; align-items: center; }
.v-tools1 { left: 362px; top: 134px; width: 81px; height: 17px; padding-left: 3px; gap: 4px; }
.v-tools1 em { width: 3px; height: 9px; background: linear-gradient(#999, #eee); margin-bottom: 3px; }
.v-tools2 { left: 559px; top: 293px; width: 50px; height: 18px; gap: 10px; }

.v-bars { left: 30px; top: 132px; }
.din { font-family: Roboto, sans-serif; font-weight: 500; fill: #252423; }
.title { font-size: 9.500px; }
.axis { font-size: 6.500px; }
.title3 { font-size: 29px; }
.axis3 { font-size: 19px; }
.seg { font-size: 7.400px; fill: #605e5c; }
.seg3 { font-size: 22px; fill: #605e5c; }
.wh { fill: #fff; font-weight: 600; }
.mid text { text-anchor: middle; }
.end text { text-anchor: end; }
.v-line { left: 262px; top: 154px; }

.v-matrix { left: 453px; top: 166px; width: 156px; height: 107px; padding: 3px 0 0 3px; }
.c-mx { width: 123px; }
.c-mx .r { grid-template-columns: 73px auto; height: 12.500px; line-height: 12.500px; }
.c-mx .h { height: 17px; line-height: 14px; }
.c-mx .h b { padding-left: 3px; }
.c-mx .r > :nth-child(2) { text-align: right; padding-right: 3px; border-left: 1px solid #a9d4f7; }
.c-mx .h b:nth-child(2) { border: 0; padding-right: 8px; }
.c-mx .rows i:first-child { display: flex; align-items: center; gap: 4px; padding-left: 3px; }
.c-mx .t i:first-child { padding-left: 13px; }

.v-france { left: 632px; top: 166px; width: 160px; height: 107px; padding: 3px 0 0 3px; }
.c-fr { width: 142px; }
.c-fr .r { grid-template-columns: 96px auto; }
.c-fr .h { height: 16.500px; line-height: 14px; }
.c-fr .r > :first-child { text-align: right; }
.c-fr .r > :nth-child(2) { padding-left: 7px; }
.lined.c-fr .rows { height: 69px; }
.c-fr .rows, .c-rk .rows, .c-pr .rows { border-bottom: 1px solid #5aa9ec; }
.v-france .vbar { left: 150px; top: 3px; width: 5px; height: 33px; }

.v-region { left: 31px; top: 307px; width: 206px; }
.c-rg { width: 149px; }
.c-rg .r { grid-template-columns: 1fr 1fr; padding: 0 3px; }
.c-rg .r > :nth-child(2) { text-align: right; }
.c-rg .h { height: 19px; line-height: 14px; }
.c-rg .t { padding-top: 2px; height: 16px; }
.v-region .vbar { left: 199px; top: 0; width: 5px; height: 50px; }

.v-rank { left: 241px; top: 316px; width: 196px; }
.c-rk { width: 192px; }
.c-rk .r { grid-template-columns: 25px 91px 50px auto; }
.c-rk .r > :nth-child(-n+3) { text-align: right; }
.c-rk .r > :nth-child(4) { padding-left: 6px; }
.c-rk .h { height: 17px; line-height: 14px; }
.c-rk .rows { height: 86px; }
.v-rank .hbar { left: 42px; top: 117px; width: 130px; height: 4px; }
.v-rank .vbar { left: 191px; top: 1px; width: 5px; height: 49px; }

.v-card2 { left: 453px; top: 313px; width: 156px; height: 129px; background: #fff; box-shadow: 4px 4px 6px rgba(0,0,0,.25); }
.handles { position: absolute; left: 0; top: 0; }
.card-title { font: 500 9.500px/14px Roboto, sans-serif; padding-left: 4px; letter-spacing: .33px; white-space: nowrap; height: 50px; }
.v-card2 .sub { padding-top: 1px; }

.v-rate { left: 622px; top: 286px; width: 180px; font-size: 7px; display: flex; flex-direction: column; }
.v-rate b { font-size: 6.300px; line-height: 10px; color: #2d3f52; letter-spacing: -.1px; }
.v-rate span { width: 46px; height: 16px; margin-top: 3px; border: 1px solid #eee; padding-left: 3px; line-height: 13px; }
.v-rate svg { margin: 3px 0 0 8px; }

.v-prod { left: 618px; top: 352px; width: 190px; }
.c-pr { width: 183px; }
.c-pr .r { grid-template-columns: 52px 55px 56px auto; padding-left: 3px; }
.c-pr .r > :nth-child(3) { text-align: right; padding-right: 3px; }
.c-pr .r > :nth-child(4) { padding-left: 4px; }
.c-pr .h { height: 18px; line-height: 16px; }
.lined.c-pr .rows { height: 51px; }
.v-prod .hbar { left: 0; top: 81px; width: 112px; height: 4px; }
.v-prod .vbar { left: 184px; top: 2px; width: 5px; height: 28px; }

/* page navigation */
.pages { height: 35px; margin-left: 41px; display: flex; background: #f2f1f0; }
.layout-btn { margin-left: 9px; width: 24px; height: 30px; display: flex; align-items: center; justify-content: center; }
.sel.layout-btn { border-bottom: 3px solid #117865; }
.phone { margin-left: 20px; }
.arrows { display: flex; gap: 17px; align-items: center; margin-left: 16px; width: 34px; }
.page-tab { width: 76px; background: #fff; border-left: 1px solid #aaa; border-bottom: 3px solid #117865; text-align: center; font-weight: 600; font-size: 12px; line-height: 36px; letter-spacing: -.3px; }
.page-add { width: 39px; background: #117865; display: flex; align-items: center; justify-content: center; }

/* visualizations pane */
.viz { width: 181px; border-left: 1px solid #e1dfdd; border-right: 1px solid #e1dfdd; }
.pane-head { display: flex; justify-content: space-between; align-items: center; padding: 8px 7px 0 8px; height: 31px; }
.viz .pane-head { padding-left: 7px; }
h2 { margin: 0; font-size: 15.500px; font-weight: 600; line-height: 20px; letter-spacing: -.42px; }
.format-label { padding: 6px 0 0 7px; font-weight: 600; font-size: 12px; line-height: 17px; letter-spacing: -.38px; }
.modes { display: flex; justify-content: space-between; padding: 3px 8px 0 7px; }
.modes div { width: 32px; height: 32px; display: flex; align-items: center; justify-content: center; }
.modes .sel { background: #d2d0ce; }
.notch { margin-top: 5px; }
.viz-search { margin: 8px 8px 0 7px; height: 26px; border: 1px solid #a19f9d; border-radius: 2px; display: flex; align-items: center; gap: 5px; padding-left: 7px; font-size: 13px; letter-spacing: -.1px; color: #605e5c; width: 164px; }
.viz-tabs { display: flex; height: 40px; padding: 15px 15px 0 11px; font-size: 13.500px; line-height: 20px; letter-spacing: -.2px; }
.viz-tabs span { margin-right: 16px; height: 25px; }
.viz-tabs .cur { font-weight: 700; border-bottom: 2px solid #117865; letter-spacing: -.55px; width: 49px; }
.viz-tabs svg { margin: 8px 0 0 auto; }
.cards { height: 288px; margin-top: 15px; background: #e1dfdd; position: relative; padding: 0 7px; display: flex; flex-direction: column; gap: 9px; }
.card-box { width: 164px; height: 39px; background: #f3f2f1; border-radius: 3px; box-shadow: 0 1px 3px rgba(0,0,0,.15); padding: 0 8px 0 10px; }
.card-box.first { height: 159px; padding: 0 8px; }
.line { display: flex; align-items: center; height: 39px; font-size: 12.500px; letter-spacing: -.3px; }
.first .line { height: 23px; }
.line b { font-weight: 600; margin-left: 6px; }
.first .line b { margin-left: 4px; letter-spacing: -.5px; }
.toggle { margin-left: auto; width: 32px; height: 16px; border-radius: 8px; background: #117865; color: #fff; font-size: 9.500px; font-weight: 600; display: flex; align-items: center; justify-content: space-between; padding: 0 4px 0 5px; }
.toggle em { width: 8px; height: 8px; border-radius: 4px; background: #fff; }
.card-box label { display: block; font-size: 12px; line-height: 17px; margin: 8px 0 2px; letter-spacing: -.2px; }
.colors { display: flex; gap: 4px; padding-top: 1px; margin-bottom: 7px; }
.color-box { width: 53px; height: 25px; border: 1px solid #a19f9d; background: #fff; border-radius: 2px; display: flex; align-items: center; justify-content: space-between; padding: 0 4px; }
.color-box em { width: 17px; height: 17px; border: 1px solid #999; }
.fx { width: 25px; height: 25px; border: 1px solid #a19f9d; background: #fff; border-radius: 2px; text-align: center; font: italic 16px/21px "Liberation Serif", serif; }
.transp { display: flex; align-items: center; padding-top: 12px; gap: 2px; }
.spin { width: 54px; height: 25px; border: 1px solid #a19f9d; background: #fff; border-radius: 2px; padding: 0 1px 0 5px; display: flex; align-items: center; justify-content: space-between; color: #605e5c; }
.reset { display: flex; align-items: center; gap: 5px; height: 21px; padding: 4px 0 0 2px; font-size: 12px; letter-spacing: -.2px; color: #444; margin-top: 0; line-height: 21px; }
.thumb { position: absolute; background: #8a8886; border-radius: 3px; }
.cards .thumb { left: 173px; top: 66px; width: 6px; height: 138px; }

/* data pane */
.data { width: 180px; }
.data-search { width: 171px; margin: 14px 0 0 5px; height: 25px; background: #fff; border: 1px solid #d8d6d4; border-bottom-color: #999; border-radius: 3px; display: flex; align-items: center; gap: 4px; padding-left: 11px; font-size: 13px; letter-spacing: -.1px; color: #605e5c; }
.fields { position: relative; padding: 1px 0 0 44px; font-size: 12px; letter-spacing: -.25px; color: #333; }
.fields div { height: 24px; display: flex; align-items: center; white-space: nowrap; }
.fields s { width: 12px; height: 12px; border: 1px solid #8a8886; border-radius: 2px; margin-right: 8px; flex: none; }
.fields s svg { width: 10px; height: 10px; margin: 0; }
.fields .ck { background: #117865; border-color: #117865; }
.fields svg { width: 12px; height: 14px; margin-right: 6px; }
.fields .thumb { left: 169px; top: 232px; width: 7px; height: 178px; border-radius: 0; }

/* status bar */
.status { height: 23px; flex: none; display: flex; align-items: center; font-size: 12px; letter-spacing: -.2px; padding-left: 4px; border-bottom: 1px solid #444; color: #555; white-space: nowrap; }
.status > span:first-child { width: 871px; }
.zoom { display: flex; align-items: center; width: 209px; }
.zoom span { margin: 0 19px 0 13px; width: 23px; }
.update { letter-spacing: -.27px; }

/* taskbar */
.taskbar { height: 48px; flex: none; background: #eee; display: flex; align-items: center; }
.weather { display: flex; gap: 9px; align-items: center; padding-left: 21px; width: 290px; line-height: 16px; font-size: 12px; letter-spacing: -.3px; }
.weather span { color: #666; }
.dock { display: flex; width: 719px; }
.dock > div { width: 38px; margin-right: 6.100px; height: 40px; display: flex; justify-content: center; align-items: center; border-radius: 4px; position: relative; }
.dock svg { width: 26px; height: 26px; margin-left: 4px; }
.dock .warm, .dock .active { transform: translateX(1px); }
.dock .warm svg, .dock .active svg { margin-left: 2px; }
.warm { background: #e9b0ae; }
.warm::after, .active::after, .run::after { content: ""; position: absolute; bottom: 1px; left: 9px; width: 20px; height: 3px; border-radius: 2px; background: #c42b1c; }
.warm:nth-child(11)::after { left: 3px; width: 32px; }
.active { background: #fafafa; }
.active::after { left: 13px; width: 14px; background: #0a78d4; }
.run::after { left: 18px; width: 6px; background: #888; }
.badge { font: 600 6.500px "Open Sans", sans-serif; fill: #fff; text-anchor: middle; }
.tray { display: flex; align-items: center; width: 182px; padding-left: 10px; }
.tray svg:nth-child(2) { margin: 0 16px 0 17px; }
.lang { width: 42px; letter-spacing: -.4px; }
.tray svg:nth-child(4), .tray svg:nth-child(5) { margin-right: 8px; }
.clock { text-align: right; line-height: 16px; letter-spacing: -.4px; width: 70px; }
```
